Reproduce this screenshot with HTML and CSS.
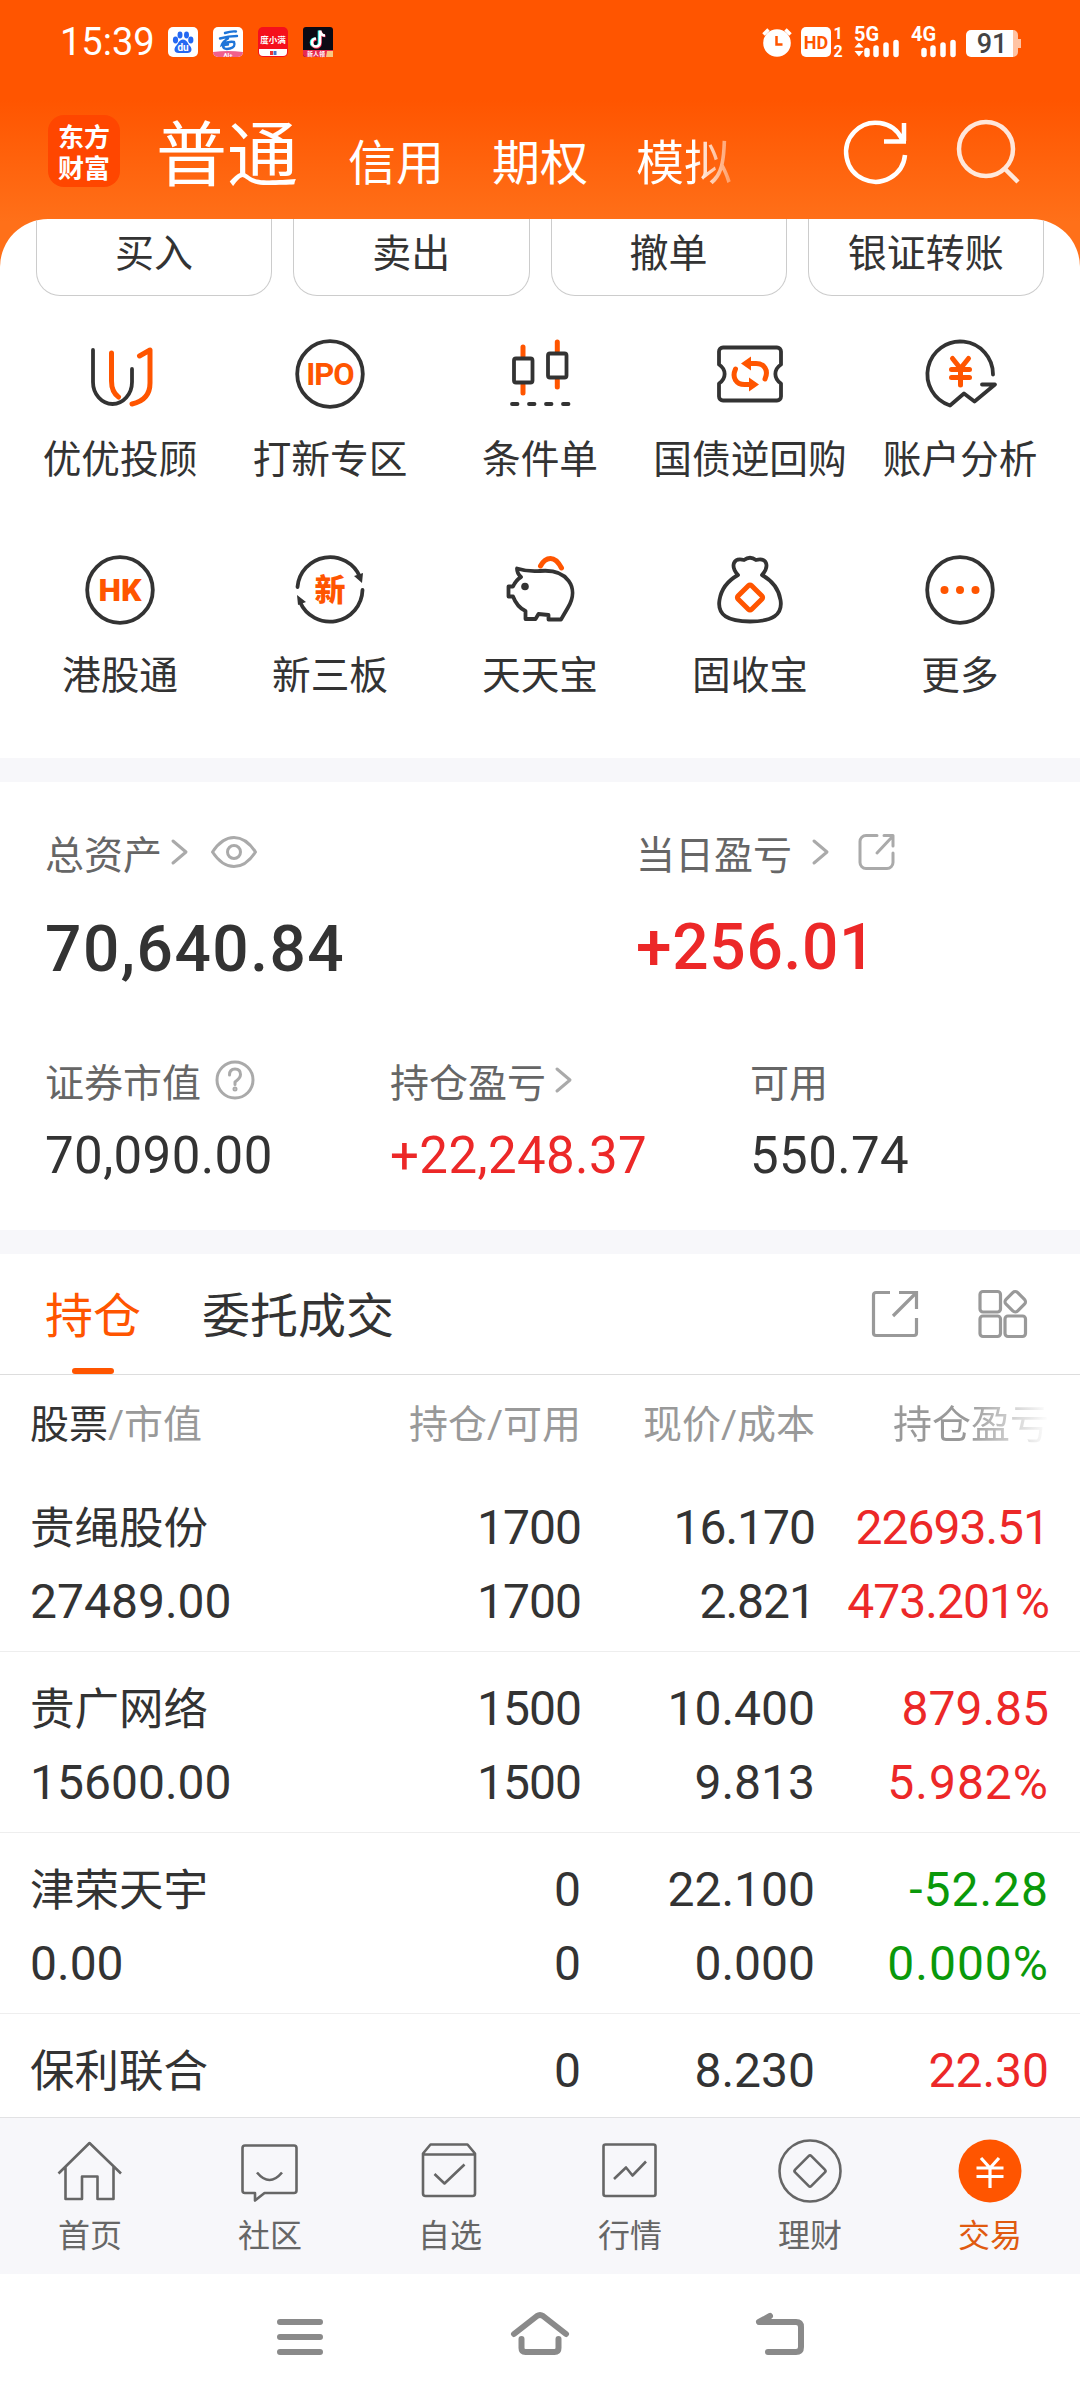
FILE: index.html
```
<!DOCTYPE html>
<html lang="zh-CN">
	<head>
		<meta charset="utf-8">
		<title>交易</title>
		<link rel="stylesheet" href="styles.css">
	</head>
	<body>
		<div class="wrap">
			<header class="head">
				<!--系统状态栏-->
				<div class="status">
					<span class="clock">15:39</span>
					<div class="apps">
						<svg width="30" height="30" viewBox="0 0 30 30"><rect width="30" height="30" rx="5" fill="#fff"/><g fill="#2468f2"><ellipse cx="7.500" cy="13" rx="2.600" ry="3.400"/><ellipse cx="12" cy="8" rx="2.500" ry="3.400"/><ellipse cx="18.500" cy="8" rx="2.500" ry="3.400"/><ellipse cx="22.800" cy="13" rx="2.600" ry="3.400"/><path d="M15 12.500c4 0 4.500 4 7 6.500s2 7-2.500 7h-9c-4.500 0-5-4.500-2.500-7s3-6.500 7-6.500z"/></g><text x="15" y="24" class="t-du">du</text></svg>
						<svg width="30" height="30" viewBox="0 0 30 30"><rect width="30" height="30" rx="5" fill="#fff"/><path d="M0 25q15-2 30 0a5 5 0 0 1-5 5H5a5 5 0 0 1-5-5z" fill="#f0608c"/><g fill="none" stroke="#1d74d8" stroke-width="2.400" stroke-linecap="round"><path d="M12 6q6-2 11-1.500M7 11.500q8-2.500 17-2.500M15 11.500q-5 3-6 6 6-3.500 12-2.500 2 5-4 6.500t-7-2q1-2 5-2"/></g><text x="15" y="29.500" class="t-ai">AI+</text></svg>
						<svg width="30" height="30" viewBox="0 0 30 30"><rect width="30" height="30" rx="5" fill="#f5101c"/><path d="M1 22h28v3a4 4 0 0 1-4 4H5a4 4 0 0 1-4-4z" fill="#fff"/><path d="M12 24h3v4h-3z" fill="#e33"/><path d="M15.500 24h3v4h-3z" fill="#47c"/><text x="15" y="16" class="t-man">度小满</text></svg>
						<svg width="30" height="30" viewBox="0 0 30 30"><rect width="30" height="30" rx="3" fill="#0b0a14"/><path d="M0 23h30v4a3 3 0 0 1-3 3H3a3 3 0 0 1-3-3z" fill="#e6294f"/><path d="M23 30l1-6h6v6z" fill="#f8c983"/><g fill="none" stroke-width="2.600"><path d="M16 3.500v12a4 4 0 1 1-4-4" stroke="#25f4ee"/><path d="M17.500 4.500v12a4 4 0 1 1-4-4M17.500 4q1 5 5 5" stroke="#fe2c55"/><path d="M17 3.500v12a4 4 0 1 1-4-4M17 3.500q1 5 5 5" stroke="#fff"/></g><text x="13" y="29" class="t-live">新人领</text></svg>
					</div>
					<div class="signals">
						<svg width="260" height="32" viewBox="0 0 260 32" fill="#fff">
							<circle cx="15" cy="17" r="13.800"/><path d="M1.500 8.500l5-5M28.500 8.500l-5-5" stroke="#fff" stroke-width="3.500"/><path d="M14.500 10v8.500h6" fill="none" stroke="#f50" stroke-width="2.500"/>
							<rect x="39" y="1" width="30" height="30" rx="5"/><text x="54" y="23" class="t-hd">HD</text>
							<text x="76" y="12.500" class="t-sim">1</text><text x="76" y="31" class="t-sim">2</text>
							<text x="92" y="15" class="t-net">5G</text><path d="M92.500 21.500l4.500-5 4.500 5zM92.500 25l4.500 5.500 4.500-5.500z"/>
							<path d="M105 24.500v4M114 22v6.500M124 19v9.500M134 16.500v12" stroke="#fff" stroke-width="5.500" stroke-linecap="round"/>
							<text x="149" y="15" class="t-net">4G</text>
							<path d="M162 24.500v4M171 22v6.500M181 19v9.500M191 16.500v12" stroke="#fff" stroke-width="5.500" stroke-linecap="round"/>
							<path d="M209 4h42a5 5 0 0 1 5 5v4h3v9h-3v4a5 5 0 0 1-5 5h-42z" fill="#ffc3a3"/>
							<path d="M209 4h42v27h-42a5 5 0 0 1-5-5V9a5 5 0 0 1 5-5z"/><text x="230" y="27" class="t-bat">91</text>
						</svg>
					</div>
				</div>
				<!--账户类型切换-->
				<div class="title">
					<div class="logo"><span>东方</span><span>财富</span></div>
					<div class="types">
						<span class="on">普通</span><span>信用</span><span>期权</span><span class="fade">模拟</span>
					</div>
					<svg class="refresh" width="66" height="66" viewBox="0 0 66 66"><path d="M62 36A29.500 29.500 0 1 1 59 20M61 4v18M41 22.500h22" /></svg>
					<svg class="search" width="66" height="66" viewBox="0 0 66 66"><circle cx="30" cy="30" r="27"/><path d="M49 50l13 13"/></svg>
				</div>
			</header>

			<main class="sheet">
				<div class="deal">
					<span>买入</span><span>卖出</span><span>撤单</span><span>银证转账</span>
				</div>

				<div class="menu">
					<div class="item">
						<svg viewBox="0 0 72 72"><path class="d" d="M9 12v32a19.500 22 0 0 0 39 0V31"/><path class="o" d="M27.500 15v28q0 11 7 16M55.500 18L66 12v33q0 17-18 21"/></svg>
						<span>优优投顾</span>
					</div>
					<div class="item">
						<svg viewBox="0 0 72 72"><circle class="d" cx="36" cy="36" r="32.800"/><text class="t-icon t-ipo" x="36" y="47">IPO</text></svg>
						<span>打新专区</span>
					</div>
					<div class="item">
						<svg viewBox="0 0 72 72"><path class="o" d="M19 9v9M19 47v8M53.300 4v9M53.300 42v7"/><path class="d" d="M8 66h5.500M25 66h5.500M42 66h5.500M59 66h5.500"/><rect class="d" x="10" y="20.500" width="18.500" height="24" rx="2"/><rect class="d" x="44" y="15.500" width="18.500" height="24" rx="2"/></svg>
						<span>条件单</span>
					</div>
					<div class="item">
						<svg viewBox="0 0 72 72"><path class="d" d="M9 9.500h54a4 4 0 0 1 4 4v13c-7.500 5-7.500 14 0 19v13a4 4 0 0 1-4 4H9a4 4 0 0 1-4-4v-13c7.500-5 7.500-14 0-19v-13a4 4 0 0 1 4-4z"/><path class="o" d="M51 41c4-9-1-15.500-9-15.500h-7M21.500 31c-4 9 1 15.500 9 15.500h7"/><path class="of" d="M27 25.500l10-7v14zM45 46.500l-10-7v14z"/></svg>
						<span>国债逆回购</span>
					</div>
					<div class="item">
						<svg viewBox="0 0 72 72"><path class="d" d="M69 36.500A32.800 32.800 0 1 0 26 67.500l14-12 10.500 8L71 46.500H58"/><path class="o" d="M28.500 20.500l8 10 8-10M36.500 30.500V47M27.500 31.500h18M27.500 39.500h18"/></svg>
						<span>账户分析</span>
					</div>
					<div class="item">
						<svg viewBox="0 0 72 72"><circle class="d" cx="36" cy="36" r="32.800"/><text class="t-icon" x="36" y="47">HK</text></svg>
						<span>港股通</span>
					</div>
					<div class="item">
						<svg viewBox="0 0 72 72"><path class="d" d="M3.500 33A32.600 32.600 0 0 1 66 23M68.500 36A32.600 32.600 0 0 1 6 48"/><path class="df" d="M60 22l9-3-1 10zM3 41l1 10 8-3z"/><text class="t-xin" x="36" y="47">新</text></svg>
						<span>新三板</span>
					</div>
					<div class="item">
						<svg viewBox="0 0 72 72"><path class="d" d="M36 17q-12 1-23-2.500 0 5 4 8.500-5 3-8 9.500H4.500v10H9Q13 53 21.500 57v8h10l3-5 10 1v4.500H57l7-12c12-20-1-39-28-36.500z"/><circle class="df" cx="21" cy="32.500" r="3.800"/><path class="o" d="M36.500 12q4-7.500 10-7.500T57.500 14"/></svg>
						<span>天天宝</span>
					</div>
					<div class="item">
						<svg viewBox="0 0 72 72"><path class="d" d="M24 21q-6-7-4-12t10-3q6-4.500 12 0 8-2 10 3t-4 12q16 9 18.500 25C69 61 58 67.500 36 67.500S3 61 5.500 46Q8 30 24 21z"/><rect class="o" x="26.500" y="34" width="19" height="19" rx="2" transform="rotate(45 36 43.500)"/></svg>
						<span>固收宝</span>
					</div>
					<div class="item">
						<svg viewBox="0 0 72 72"><circle class="d" cx="36" cy="36" r="32.800"/><g class="of"><circle cx="20.500" cy="36" r="4"/><circle cx="36" cy="36" r="4"/><circle cx="51.500" cy="36" r="4"/></g></svg>
						<span>更多</span>
					</div>
				</div>

				<!--资产概览-->
				<section class="assets">
					<div class="row big">
						<div class="cell">
							<p class="label">总资产<svg class="arrow" width="20" height="30" viewBox="0 0 20 30"><path d="M4 4l13 11L4 26"/></svg><svg class="eye" width="48" height="34" viewBox="0 0 48 34"><path d="M2.500 17Q12 2.500 24 2.500T45.500 17Q36 31.500 24 31.500T2.500 17z"/><circle cx="24" cy="17" r="6.500"/></svg></p>
							<p class="num">70,640.84</p>
						</div>
						<div class="cell">
							<p class="label">当日盈亏<svg class="arrow far" width="20" height="30" viewBox="0 0 20 30"><path d="M4 4l13 11L4 26"/></svg><svg class="out" width="40" height="40" viewBox="0 0 40 40"><path d="M20 3.500H9a6 6 0 0 0-6 6v21a6 6 0 0 0 6 6h21a6 6 0 0 0 6-6V21M27 3.500h9V14M20 21L35 5"/></svg></p>
							<p class="num red up">+256.01</p>
						</div>
					</div>
					<div class="row small">
						<div class="cell">
							<p class="label">证券市值<svg class="ask" width="40" height="40" viewBox="0 0 40 40"><circle cx="20" cy="20" r="18"/><path d="M14.500 15q0-6 5.500-6t5.500 5.500Q25.500 18 20 22v2.500"/><circle cx="20" cy="29" r="1"/></svg></p>
							<p class="num">70,090.00</p>
						</div>
						<div class="cell">
							<p class="label">持仓盈亏<svg class="arrow" width="20" height="30" viewBox="0 0 20 30"><path d="M4 4l13 11L4 26"/></svg></p>
							<p class="num red">+22,248.37</p>
						</div>
						<div class="cell">
							<p class="label">可用</p>
							<p class="num">550.74</p>
						</div>
					</div>
				</section>

				<nav class="tabs">
					<span class="tab active">持仓</span>
					<span class="tab">委托成交</span>
					<svg class="export" width="48" height="48" viewBox="0 0 48 48"><path d="M19 2.500H5a2.500 2.500 0 0 0-2.500 2.500v38A2.500 2.500 0 0 0 5 45.500h38a2.500 2.500 0 0 0 2.500-2.500V28M28 2.500h17.500V19M22 26L45 3"/></svg>
					<svg class="blocks" width="50" height="50" viewBox="0 0 50 50"><rect x="2" y="2.500" width="20.500" height="20.500" rx="3"/><rect x="2" y="27" width="20.500" height="20.500" rx="3"/><rect x="27" y="27" width="20.500" height="20.500" rx="3"/><rect x="29" y="4.500" width="16.500" height="16.500" rx="3.500" transform="rotate(45 37.250 12.750)"/></svg>
				</nav>

				<!--持仓列表-->
				<div class="list">
					<div class="line th">
						<span><b>股票</b>/市值</span><span>持仓/可用</span><span>现价/成本</span><span class="cut">持仓盈亏</span>
					</div>
					<div class="line">
						<span class="name">贵绳股份</span><span class="tight">1700</span><span class="tight">16.170</span><span class="red tight">22693.51</span>
						<span>27489.00</span><span class="tight">1700</span><span class="tight">2.821</span><span class="red tight">473.201%</span>
					</div>
					<div class="line">
						<span class="name">贵广网络</span><span class="tight">1500</span><span>10.400</span><span class="red">879.85</span>
						<span>15600.00</span><span class="tight">1500</span><span>9.813</span><span class="red pct">5.982%</span>
					</div>
					<div class="line">
						<span class="name">津荣天宇</span><span>0</span><span>22.100</span><span class="green pct">-52.28</span>
						<span>0.00</span><span>0</span><span>0.000</span><span class="green pct">0.000%</span>
					</div>
					<div class="line last">
						<span class="name">保利联合</span><span>0</span><span>8.230</span><span class="red">22.30</span>
					</div>
				</div>
			</main>

			<nav class="bottom">
				<div><svg viewBox="0 0 72 72"><path d="M4.500 38.500l31-30.500L67 38.500M11.500 32v32H28V41.500h15.500V64h16V32"/></svg><span>首页</span></div>
				<div><svg viewBox="0 0 72 72"><path d="M11 10.500h49a2.500 2.500 0 0 1 2.500 2.500v42.500A2.500 2.500 0 0 1 60 58H30.500l-9.500 7.500V58H11a2.500 2.500 0 0 1-2.500-2.500V13a2.500 2.500 0 0 1 2.500-2.500zM23 37.500q12.500 15 25 0"/></svg><span>社区</span></div>
				<div><svg viewBox="0 0 72 72"><path d="M9 18.500l7.500-9h37l7.500 9v40a2.500 2.500 0 0 1-2.500 2.500h-47A2.500 2.500 0 0 1 9 58.500zM9 19.500h52M20.500 39l10 9.500 20-19"/></svg><span>自选</span></div>
				<div><svg viewBox="0 0 72 72"><rect x="9.500" y="9.500" width="52" height="51.500" rx="2"/><path d="M20 44l12-11.500 6.500 8L52 26.500"/></svg><span>行情</span></div>
				<div><svg viewBox="0 0 72 72"><circle cx="36" cy="36" r="30.500"/><rect x="24.500" y="24.500" width="23" height="23" rx="2" transform="rotate(45 36 36)"/></svg><span>理财</span></div>
				<div class="now"><svg viewBox="0 0 72 72"><circle cx="36" cy="36" r="31.500"/><path d="M27 23l9 10 9-10M36 33v20M22.500 33h27M22.500 41.500h27"/></svg><span>交易</span></div>
			</nav>

			<!--系统导航键-->
			<footer class="keys">
				<svg viewBox="0 0 60 60"><path d="M10 14h40M10 29h40M10 44h40"/></svg>
				<svg viewBox="0 0 60 60"><path d="M4 26L27 8q3-2 6 0l23 18M11.500 31v9q0 4 4 4h29q4 0 4-4v-9"/></svg>
				<svg viewBox="0 0 60 60"><path d="M20 8L9 14h37q5 0 5 5v20q0 5-5 5H18"/></svg>
			</footer>
		</div>
	</body>
</html>
```
FILE: styles.css
```
body,html{
	margin: 0;
}
p{
	margin: 0;
}
.wrap{
	width: 1080px;
	height: 2400px;
	display: flex;
	flex-direction: column;
	overflow: hidden;
	background: linear-gradient(#ff5500 100px, #ff7019 222px, #ff7019 300px, #fff 300px);
	font-family: Roboto, "Noto Sans CJK SC", sans-serif;
	color: #333;
}
svg{
	display: block;
	flex: none;
	overflow: visible;
}
.red{
	color: #ec2828;
}
.green{
	color: #0a990a;
}

/* 头部 */
.head{
	height: 219px;
	flex: none;
	color: #fff;
}
.status{
	height: 84px;
	display: flex;
	align-items: center;
	padding: 0 58px 0 60px;
}
.clock{
	width: 108px;
	font-size: 38px;
	line-height: 84px;
}
.apps{
	display: flex;
	gap: 15px;
}
.signals{
	margin-left: auto;
}
.status text{
	font-weight: bold;
	text-anchor: middle;
	fill: #fff;
}
.status .t-du{
	font-size: 10px;
}
.status .t-ai{
	font-size: 6px;
}
.status .t-man{
	font-size: 8.5px;
}
.status .t-live{
	font-size: 6px;
}
.status .t-hd{
	font-size: 18px;
	fill: #f50;
}
.status .t-sim{
	font-size: 16px;
}
.status .t-net{
	font-size: 20px;
	text-anchor: start;
}
.status .t-bat{
	font-size: 27px;
	font-weight: 500;
	fill: #444;
}
.title{
	height: 135px;
	display: flex;
	padding: 0 58px 0 48px;
}
.logo{
	box-sizing: border-box;
	display: flex;
	flex-direction: column;
	gap: 1px;
	width: 72px;
	height: 72px;
	margin-top: 31px;
	padding-top: 6px;
	border-radius: 16px;
	background: #ff4600;
	text-align: center;
	font: bold 26px/30px "Noto Sans CJK SC", sans-serif;
}
.types{
	display: flex;
	align-items: baseline;
	gap: 48px;
	margin-left: 36px;
	font-size: 48px;
	line-height: 143px;
}
.types .on{
	margin-right: 2px;
	font-size: 71px;
}
.types .fade{
	background: linear-gradient(90deg, #fff 60%, rgba(255,255,255,.35));
	-webkit-background-clip: text;
	background-clip: text;
	color: transparent;
}
.refresh,.search{
	fill: none;
	stroke: #fff;
	stroke-width: 4.5;
	margin-top: 35px;
}
.refresh{
	margin-left: auto;
}
.search{
	margin-left: 47px;
	opacity: .85;
}

/* 主体白底 */
.sheet{
	height: 1898px;
	flex: none;
	overflow: hidden;
	background: #fff;
	border-radius: 48px 48px 0 0;
}
.deal{
	display: grid;
	grid-template-columns: repeat(4, 1fr);
	gap: 21px;
	padding: 0 36px;
}
.deal span{
	box-sizing: border-box;
	height: 77px;
	border: 1px solid #ccc;
	border-top: none;
	border-radius: 0 0 24px 24px;
	text-align: center;
	font-size: 39px;
	line-height: 71px;
}
.menu{
	display: grid;
	grid-template-columns: repeat(5, 210px);
	grid-auto-rows: 216px;
	justify-content: center;
	height: 420px;
	padding-top: 42px;
}
.item{
	display: flex;
	flex-direction: column;
	align-items: center;
	white-space: nowrap;
	font-size: 38.7px;
}
.item svg{
	width: 72px;
	height: 72px;
}
.item span{
	margin-top: 20px;
	line-height: 60px;
}
.item .d,.item .o{
	fill: none;
	stroke: #333;
	stroke-width: 3.8;
	stroke-linecap: round;
	stroke-linejoin: round;
}
.item .o{
	stroke: #ff5500;
	stroke-width: 5;
}
.df{
	fill: #333;
}
.of{
	fill: #ff5500;
}
.t-icon,.t-xin{
	fill: #ff5500;
	font-size: 32px;
	font-weight: 900;
	text-anchor: middle;
}
.t-ipo{
	font-size: 31px;
	font-weight: 700;
	letter-spacing: -1px;
}
.t-xin{
	font-size: 31px;
}

/* 资产 */
.assets{
	box-sizing: border-box;
	height: 496px;
	padding: 40px 45px 0;
	border-top: 24px solid #f7f7fa;
	border-bottom: 24px solid #f7f7fa;
}
.row{
	display: grid;
}
.big{
	grid-template-columns: 591px 1fr;
	height: 228px;
}
.small{
	grid-template-columns: 345px 360px 1fr;
}
.label{
	display: flex;
	align-items: center;
	height: 60px;
	font-size: 39px;
	color: #666;
}
.label svg{
	fill: none;
	stroke: #aaa;
	stroke-width: 3;
	stroke-linecap: round;
	stroke-linejoin: round;
}
.arrow{
	margin-left: 7px;
}
.far{
	margin-left: 18px;
}
.eye{
	margin-left: 21px;
}
.out{
	margin-left: 27px;
}
.ask{
	margin-left: 14px;
}
.small .num{
	margin-top: 16px;
	font-size: 51px;
	line-height: 60px;
	letter-spacing: .4px;
}
.big .num{
	margin-top: 28px;
	font-size: 64px;
	font-weight: 500;
	line-height: 80px;
	letter-spacing: 1.5px;
}
.big .up{
	margin-top: 26px;
	letter-spacing: .7px;
}

/* 标签页 */
.tabs{
	display: flex;
	align-items: center;
	box-sizing: border-box;
	height: 121px;
	padding: 0 52px 0 45px;
	border-bottom: 1px solid #ddd;
	font-size: 48px;
}
.tab{
	height: 120px;
	margin-right: 61px;
	line-height: 125px;
}
.active{
	position: relative;
	color: #ff5500;
}
.active::after{
	content: "";
	position: absolute;
	left: 27px;
	bottom: 0;
	width: 42px;
	height: 6px;
	border-radius: 3px;
	background: #ff5500;
}
.tabs svg{
	fill: none;
	stroke: #999;
	stroke-width: 3.2;
}
.export{
	margin-left: auto;
	margin-right: 59px;
}

/* 持仓 */
.line{
	box-sizing: border-box;
	display: grid;
	grid-template-columns: 331px 220px 234px 234px;
	grid-auto-rows: 74px;
	height: 181px;
	padding: 20px 31px 0 30px;
	border-bottom: 1px solid #eee;
	font-size: 48px;
	line-height: 74px;
	text-align: right;
	white-space: nowrap;
}
.line span:nth-child(4n+1){
	text-align: left;
}
.line .name{
	font-size: 44.5px;
	line-height: 77px;
}
.th{
	height: 96px;
	padding-top: 13px;
	border: none;
	font-size: 39px;
	color: #999;
}
.th b{
	font-weight: normal;
	color: #333;
}
.th .cut{
	background: linear-gradient(90deg, #999 65%, #fff);
	-webkit-background-clip: text;
	background-clip: text;
	color: transparent;
}
.tight{
	letter-spacing: -1px;
}
.pct{
	letter-spacing: 1px;
}

/* 底部导航 */
.bottom{
	box-sizing: border-box;
	display: grid;
	grid-template-columns: repeat(6, 1fr);
	height: 157px;
	flex: none;
	padding-top: 17px;
	border-top: 1px solid #e2e2e4;
	background: #f7f7fa;
	color: #666;
	font-size: 32px;
}
.bottom div{
	display: flex;
	flex-direction: column;
	align-items: center;
}
.bottom svg{
	width: 72px;
	height: 72px;
	fill: none;
	stroke: #666;
	stroke-width: 2.6;
	stroke-linejoin: round;
}
.bottom span{
	margin-top: 6px;
	line-height: 46px;
}
.bottom .now{
	color: #e05a10;
}
.now circle{
	fill: #ff5500;
	stroke: none;
}
.now path{
	stroke: #fff;
	stroke-width: 3.2;
}
.keys{
	display: flex;
	flex: 1;
	justify-content: center;
	gap: 180px;
	padding-top: 34px;
	background: #fff;
}
.keys svg{
	width: 60px;
	height: 60px;
	fill: none;
	stroke: #8a8a8a;
	stroke-width: 6;
	stroke-linecap: round;
	stroke-linejoin: round;
}
```
